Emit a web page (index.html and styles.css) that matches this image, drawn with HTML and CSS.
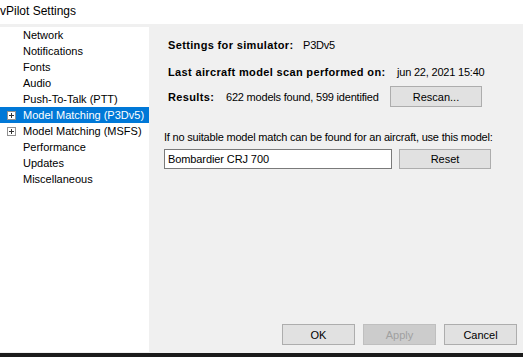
FILE: index.html
```html
<!DOCTYPE html>
<html lang="en">

<head>
    <meta charset="UTF-8">
    <meta name="viewport" content="width=device-width, initial-scale=1.0">
    <title>vPilot Settings</title>
    <link rel="stylesheet" href="styles.css">
</head>

<body>
    <div class="window">
        <div class="title_bar">vPilot Settings</div>
        <div class="main">
            <ul class="tree">
                <li class="node">Network</li>
                <li class="node">Notifications</li>
                <li class="node">Fonts</li>
                <li class="node">Audio</li>
                <li class="node">Push-To-Talk (PTT)</li>
                <li class="node selected"><span class="expander"></span>Model Matching (P3Dv5)</li>
                <li class="node"><span class="expander"></span>Model Matching (MSFS)</li>
                <li class="node">Performance</li>
                <li class="node">Updates</li>
                <li class="node">Miscellaneous</li>
            </ul>
            <div class="panel">
                <div class="info_row row_sim">
                    <span class="label lbl_sim">Settings for simulator:</span>
                    <span class="value">P3Dv5</span>
                </div>
                <div class="info_row row_scan">
                    <span class="label lbl_scan">Last aircraft model scan performed on:</span>
                    <span class="value">jun 22, 2021 15:40</span>
                </div>
                <div class="info_row row_results">
                    <span class="label lbl_results">Results:</span>
                    <span class="value val_results">622 models found, 599 identified</span>
                    <button class="btn btn_rescan">Rescan...</button>
                </div>
                <p class="fallback_text">If no suitable model match can be found for an aircraft, use this model:</p>
                <div class="fallback_row">
                    <input type="text" class="model_input" value="Bombardier CRJ 700">
                    <button class="btn btn_reset">Reset</button>
                </div>
                <div class="dialog_buttons">
                    <button class="btn btn_dialog">OK</button>
                    <button class="btn btn_dialog" disabled>Apply</button>
                    <button class="btn btn_dialog">Cancel</button>
                </div>
            </div>
        </div>
        <div class="taskbar"></div>
    </div>
</body>

</html>
```

FILE: styles.css
```css
body {
    padding: 0;
    margin: 0;
    font-family: "Liberation Sans", Arial, sans-serif;
    font-size: 11px;
    color: #000;
    background-color: #f0f0f0;
}

.window {
    width: 523px;
    height: 357px;
    display: flex;
    flex-direction: column;
    overflow: hidden;
}

.title_bar {
    height: 24px;
    line-height: 22px;
    background-color: #fff;
    font-size: 12px;
    flex-shrink: 0;
}

.main {
    display: flex;
    height: 329px;
    flex-shrink: 0;
}

.tree {
    list-style: none;
    margin: 3px 0 0 0;
    padding: 0;
    width: 149px;
    height: 325px;
    background-color: #fff;
}

.node {
    position: relative;
    height: 16px;
    line-height: 16px;
    padding-left: 23px;
    white-space: nowrap;
}

.node.selected {
    background-color: #0078d7;
    color: #fff;
}

.expander {
    position: absolute;
    left: 7px;
    top: 4px;
    width: 7px;
    height: 7px;
    border: 1px solid #919191;
    background-color: #fff;
}

.expander::before,
.expander::after {
    content: "";
    position: absolute;
    background-color: #333;
}

.expander::before {
    left: 1px;
    top: 3px;
    width: 5px;
    height: 1px;
}

.expander::after {
    left: 3px;
    top: 1px;
    width: 1px;
    height: 5px;
}

.panel {
    flex: 1;
    display: flex;
    flex-direction: column;
    padding: 13px 6px 8px 15px;
    letter-spacing: -0.2px;
}

.info_row {
    display: flex;
    align-items: center;
    padding-left: 4px;
    height: 16px;
    white-space: nowrap;
}

.label {
    font-weight: bold;
    letter-spacing: 0.35px;
}

/* labels are fixed-width so values line up like the original dialog */
.lbl_sim {
    width: 135px;
}

.lbl_scan {
    width: 229px;
}

.lbl_results {
    width: 58px;
}

.val_results {
    width: 164px;
}

.row_scan {
    margin-top: 11px;
}

.row_results {
    margin-top: 6px;
    height: 21px;
}

.btn {
    font-family: inherit;
    font-size: 11px;
    letter-spacing: 0;
    color: #000;
    background-color: #e1e1e1;
    border: 1px solid #adadad;
    padding: 0;
    margin: 0;
}

.btn_rescan {
    width: 92px;
    height: 21px;
}

.fallback_text {
    margin: 22px 0 0 0;
    height: 16px;
    line-height: 16px;
}

.fallback_row {
    display: flex;
    margin-top: 4px;
    height: 20px;
}

.model_input {
    width: 228px;
    height: 20px;
    box-sizing: border-box;
    margin: 0;
    border: 1px solid #7a7a7a;
    padding: 0 3px;
    font-family: inherit;
    font-size: 11px;
    letter-spacing: -0.1px;
    color: #000;
    background-color: #fff;
    outline: none;
}

.btn_reset {
    margin-left: 7px;
    width: 92px;
    height: 20px;
}

.dialog_buttons {
    margin-top: auto;
    display: flex;
    justify-content: flex-end;
    gap: 8px;
}

.btn_dialog {
    width: 73px;
    height: 21px;
}

.btn_dialog:disabled {
    background-color: #cccccc;
    border-color: #bfbfbf;
    color: #a0a0a0;
}

.taskbar {
    height: 4px;
    background-color: #1b1b1b;
}
```
